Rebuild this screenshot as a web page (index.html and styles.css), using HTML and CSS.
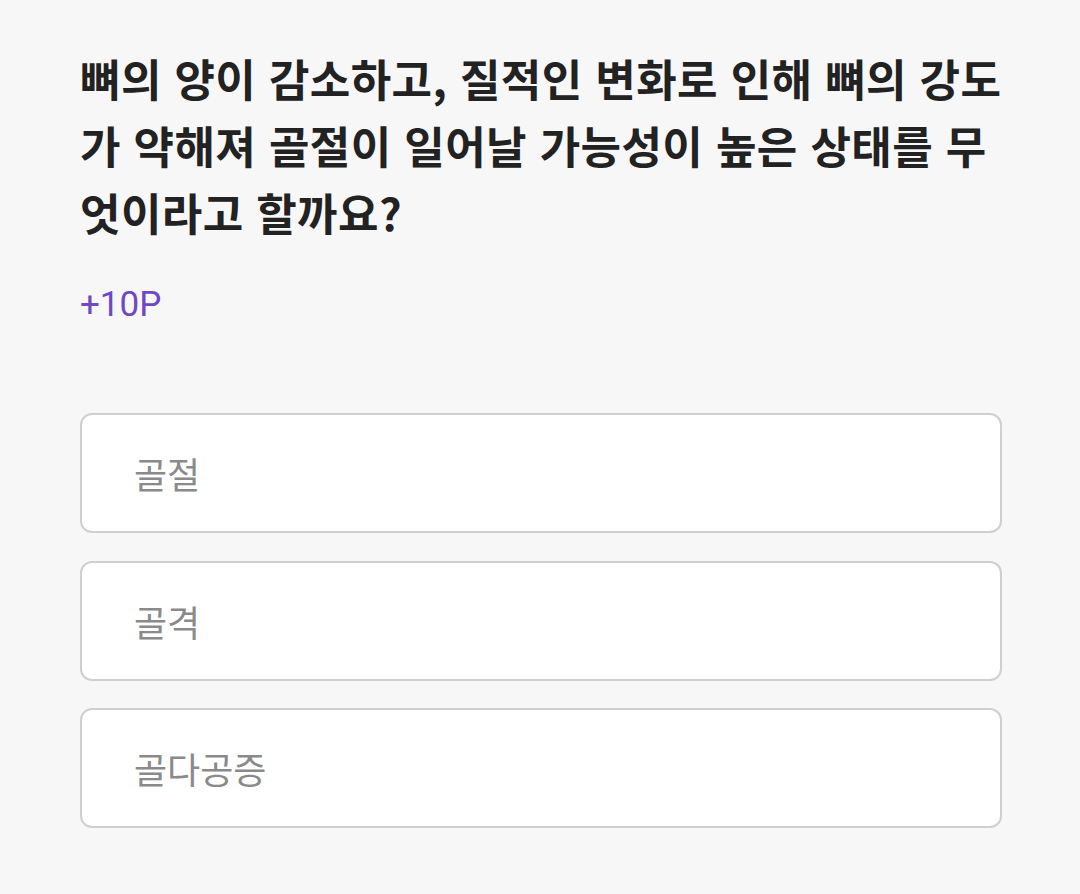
FILE: index.html
```html
<!DOCTYPE html>
<html lang="ko">
<head>
  <meta charset="UTF-8">
  <title>퀴즈</title>
  <meta name="viewport" content="width=device-width, initial-scale=1.0">
  <link rel="stylesheet" href="styles.css">
</head>
<body>
  <div class="quiz">
    <h1 class="question">뼈의 양이 감소하고, 질적인 변화로 인해 뼈의 강도가 약해져 골절이 일어날 가능성이 높은 상태를 무엇이라고 할까요?</h1>
    <p class="point">+10P</p>

    <div class="options">
      <button class="option">골절</button>
      <button class="option">골격</button>
      <button class="option">골다공증</button>
    </div>
  </div>
</body>
</html>
```

FILE: styles.css
```css
body { margin: 0; background: #f7f7f7; font-family: "Noto Sans CJK KR", "Noto Sans", sans-serif; }
.quiz { padding: 45px 76px 0 80px; }
.question { margin: 0; font-size: 44px; line-height: 67px; font-weight: 700; letter-spacing: 0.4px; color: #222; word-break: break-all; }
.point { margin: 38px 0 0; font-family: Roboto, sans-serif; font-size: 35px; color: #6f48c4; }
.options { display: flex; flex-direction: column; gap: 27.5px; margin-top: 88px; margin-right: 2px; }
.option { display: flex; align-items: center; height: 120px; padding: 0 0 0 52px; background: #fff; border: 2px solid #cfcfcf; border-radius: 12px; font-family: inherit; font-size: 36px; color: #8a8a8a; text-align: left; cursor: pointer; }
```
